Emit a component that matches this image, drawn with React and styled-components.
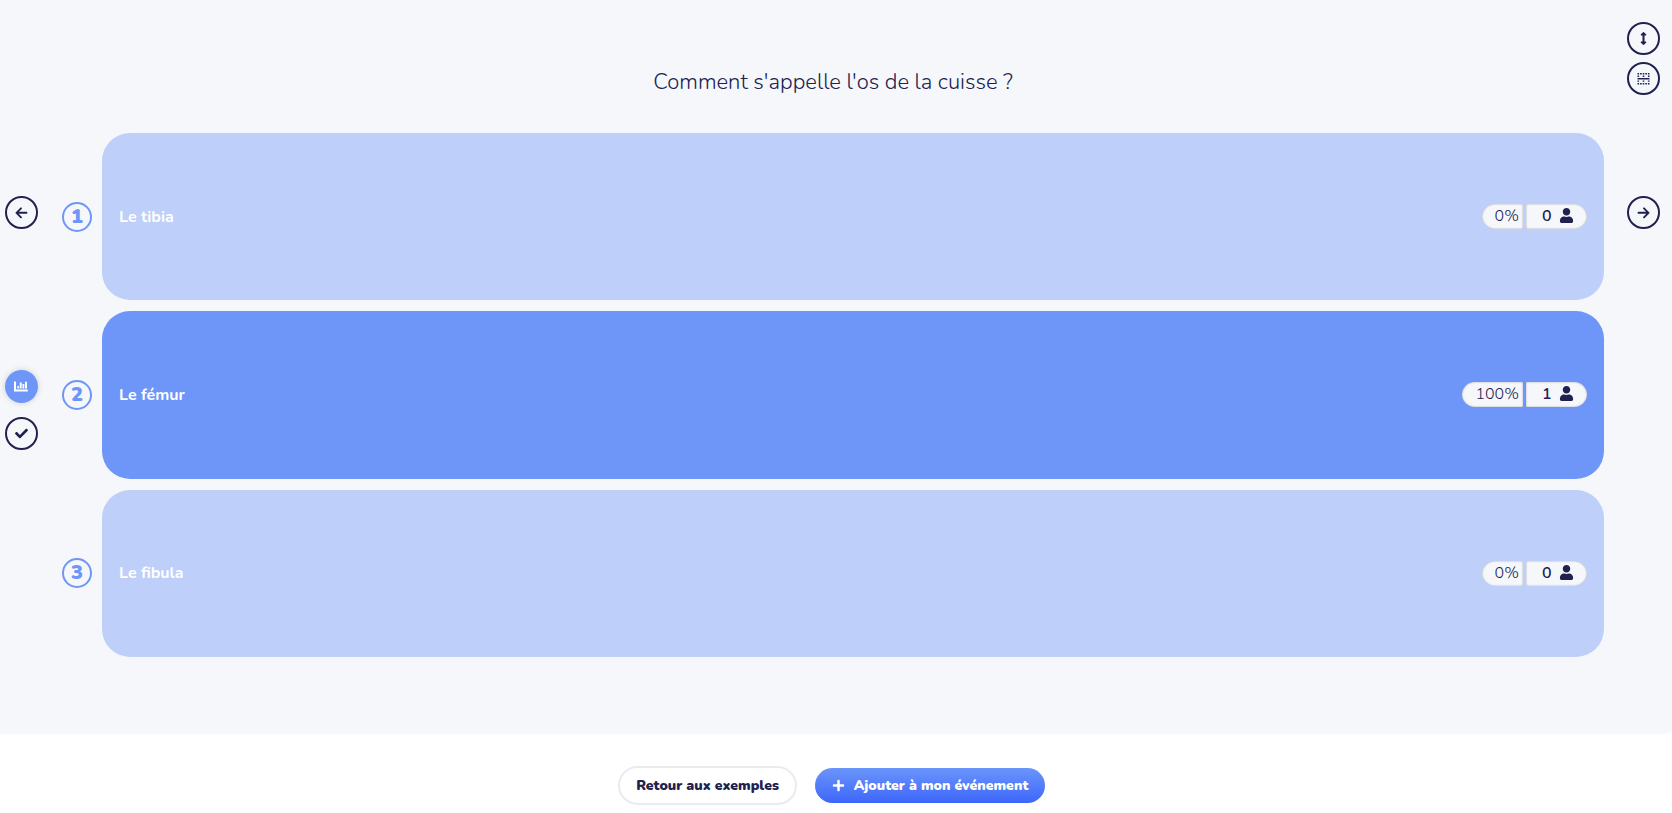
import React from "react";
import styled, { createGlobalStyle } from "styled-components";
import { FaArrowsAltV, FaCheck, FaPlus, FaUser } from "react-icons/fa";

const GlobalStyle = createGlobalStyle`
  * {
    box-sizing: border-box;
  }
  body {
    margin: 0;
    background-color: #ffffff;
    color: #20214f;
    font-family: Nunito, "Open Sans", "Noto Sans", sans-serif;
  }
  button {
    font-family: inherit;
    color: inherit;
    padding: 0;
    cursor: pointer;
  }
`;

const Page = styled.div`
  display: flex;
  flex-direction: column;
  min-height: 100vh;
`;

const Stage = styled.main`
  flex: 1;
  display: flex;
  background-color: #f5f7fb;
  border-bottom-right-radius: 12px 4px;
`;

const Rail = styled.nav`
  display: flex;
  flex-direction: column;
  flex-shrink: 0;
  gap: ${(props) => props.$gap};
  padding: ${(props) => props.$padding};
`;

const RailGroup = styled.div`
  display: flex;
  flex-direction: column;
  gap: ${(props) => props.$gap};
`;

const RoundButton = styled.button`
  display: flex;
  align-items: center;
  justify-content: center;
  width: 33px;
  height: 33px;
  border-radius: 50%;
  border: ${(props) => (props.$active ? "none" : "2px solid #20214f")};
  background-color: ${(props) => (props.$active ? "#6e96f9" : "transparent")};
  color: ${(props) => (props.$active ? "#ffffff" : "#20214f")};
  box-shadow: ${(props) =>
    props.$active ? "0 0 6px 0 rgba(0, 0, 0, 0.16)" : "none"};
`;

const Question = styled.section`
  flex: 1;
  display: flex;
  flex-direction: column;
  min-width: 0;
  padding: 65px 23px 77px 24px;
`;

const Title = styled.h1`
  margin: 0 0 34px;
  font-size: 22px;
  line-height: 34px;
  font-weight: 300;
  text-align: center;
`;

const Answers = styled.ol`
  flex: 1;
  display: flex;
  flex-direction: column;
  gap: 11px;
  margin: 0;
  padding: 0;
  list-style: none;
`;

const AnswerRow = styled.li`
  flex: 1;
  display: flex;
  align-items: center;
  gap: 10px;
`;

const AnswerNumber = styled.span`
  display: flex;
  align-items: center;
  justify-content: center;
  width: 30px;
  height: 30px;
  border: 2px solid #6e96f9;
  border-radius: 50%;
  color: #6e96f9;
  font-size: 20px;
  line-height: 24px;
  font-weight: 900;
`;

const AnswerCard = styled.div`
  flex: 1;
  align-self: stretch;
  display: flex;
  align-items: center;
  justify-content: space-between;
  padding: 0 17px;
  border-radius: 28px;
  background-color: ${(props) => (props.$correct ? "#6e96f9" : "#becffa")};
`;

const AnswerLabel = styled.span`
  color: #ffffff;
  font-size: 16px;
  line-height: 24px;
  font-weight: 700;
`;

const Stats = styled.div`
  display: flex;
  gap: 3px;
  font-size: 16px;
  line-height: 22px;
`;

const Percent = styled.span`
  height: 25px;
  padding: 1px 4px 0 13px;
  border-radius: 13px 1px 1px 13px;
  background-color: #f5f7fb;
  box-shadow: inset 0 0 2px 0 rgba(0, 0, 0, 0.35);
  font-weight: 300;
`;

const Votes = styled.span`
  display: flex;
  justify-content: space-between;
  width: 61px;
  height: 25px;
  padding: 1px 13px 0 16px;
  border-radius: 1px 13px 13px 1px;
  background-color: #f5f7fb;
  box-shadow: inset 0 0 2px 0 rgba(0, 0, 0, 0.35);
  font-weight: 600;

  svg {
    margin-top: 3px;
  }
`;

const Footer = styled.footer`
  display: flex;
  align-items: center;
  justify-content: center;
  gap: 18px;
  padding: 32px 9px 8px 0;
`;

const FooterButton = styled.button`
  display: flex;
  align-items: center;
  justify-content: center;
  gap: 9px;
  font-size: 14px;
  line-height: 20px;
  font-weight: 900;
  border-radius: 20px;
`;

const BackButton = styled(FooterButton)`
  width: 179px;
  height: 39px;
  border: 2px solid #e8ebf0;
  background-color: #ffffff;
`;

const AddButton = styled(FooterButton)`
  width: 230px;
  height: 35px;
  border: none;
  background-image: linear-gradient(#6a95fb, #3d66fb);
  color: #ffffff;
`;

const ArrowIcon = ({ right }) => (
  <svg width="13" height="13" viewBox="0 0 13 13" fill="none" stroke="currentColor" strokeWidth="1.9" strokeLinecap="round" strokeLinejoin="round">
    {right ? (
      <path d="M1.5 6.8h10M7 2.3l4.5 4.5L7 11.3" />
    ) : (
      <path d="M11.5 6.8h-10M6 2.3 1.5 6.8 6 11.3" />
    )}
  </svg>
);

const ChartIcon = () => (
  <svg width="15" height="11" viewBox="0 0 15 11" fill="currentColor">
    <path d="M0 .5h2v8h11.8v2H0zM3.3 5h1.6v2.6H3.3zM5.8 1.4h1.9v6.2H5.8zM8.5 3h1.8v4.6H8.5zM11 .8h2v6.8h-2z" />
  </svg>
);

const RowsIcon = () => (
  <svg width="13" height="13" viewBox="0 0 12 13" fill="currentColor">
    <path d="M0 6h12v1.5H0z" />
    {[0, 2.6, 5.2, 7.8, 10.4].map((x) => (
      <path key={x} d={`M${x} 1h1.6v1.4H${x}zM${x} 11h1.6v1.4H${x}z`} />
    ))}
    {[0, 5.2, 10.4].map((x) => (
      <path key={x} d={`M${x} 3.6h1.6v1.3H${x}zM${x} 8.5h1.6v1.3H${x}z`} />
    ))}
  </svg>
);

const answers = [
  { label: "Le tibia", percent: 0, votes: 0, correct: false },
  { label: "Le fémur", percent: 100, votes: 1, correct: true },
  { label: "Le fibula", percent: 0, votes: 0, correct: false },
];

const Answer = ({ number, label, percent, votes, correct }) => {
  return (
    <AnswerRow>
      <AnswerNumber>{number}</AnswerNumber>
      <AnswerCard $correct={correct}>
        <AnswerLabel>{label}</AnswerLabel>
        <Stats>
          <Percent>{percent}%</Percent>
          <Votes>
            {votes}
            <FaUser size={15} />
          </Votes>
        </Stats>
      </AnswerCard>
    </AnswerRow>
  );
};

const App = () => {
  return (
    <>
      <GlobalStyle />
      <Page>
        <Stage>
          <Rail $gap="141px" $padding="196px 0 0 5px">
            <RoundButton type="button" aria-label="Précédent">
              <ArrowIcon />
            </RoundButton>
            <RailGroup $gap="14px">
              <RoundButton type="button" aria-label="Résultats" $active>
                <ChartIcon />
              </RoundButton>
              <RoundButton type="button" aria-label="Bonne réponse">
                <FaCheck size={13} />
              </RoundButton>
            </RailGroup>
          </Rail>
          <Question>
            <Title>Comment s'appelle l'os de la cuisse ?</Title>
            <Answers>
              {answers.map((answer, index) => (
                <Answer key={answer.label} number={index + 1} {...answer} />
              ))}
            </Answers>
          </Question>
          <Rail $gap="101px" $padding="22px 12px 0 0">
            <RailGroup $gap="7px">
              <RoundButton type="button" aria-label="Hauteur">
                <FaArrowsAltV size={13} />
              </RoundButton>
              <RoundButton type="button" aria-label="Lignes">
                <RowsIcon />
              </RoundButton>
            </RailGroup>
            <RoundButton type="button" aria-label="Suivant">
              <ArrowIcon right />
            </RoundButton>
          </Rail>
        </Stage>
        <Footer>
          <BackButton type="button">Retour aux exemples</BackButton>
          <AddButton type="button">
            <FaPlus size={13} />
            Ajouter à mon événement
          </AddButton>
        </Footer>
      </Page>
    </>
  );
};

export default App;
